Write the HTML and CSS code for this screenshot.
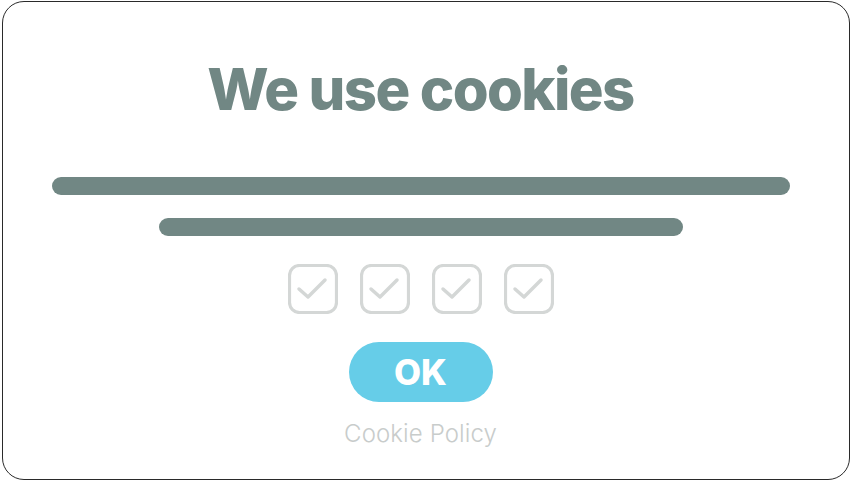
FILE: index.html
```html
<!DOCTYPE html>
<html>
<head>
<meta charset="utf-8">
<link rel="stylesheet" href="styles.css">
</head>
<body>
<div class="frame">
  <h1 class="title">We use cookies</h1>
  <div class="bar bar-long"></div>
  <div class="bar bar-short"></div>
  <div class="checks">
    <svg class="check" viewBox="0 0 50 50"><rect x="1.5" y="1.5" width="47" height="47" rx="10"/><path d="M11 25 L20 33 L37 16"/></svg>
    <svg class="check" viewBox="0 0 50 50"><rect x="1.5" y="1.5" width="47" height="47" rx="10"/><path d="M11 25 L20 33 L37 16"/></svg>
    <svg class="check" viewBox="0 0 50 50"><rect x="1.5" y="1.5" width="47" height="47" rx="10"/><path d="M11 25 L20 33 L37 16"/></svg>
    <svg class="check" viewBox="0 0 50 50"><rect x="1.5" y="1.5" width="47" height="47" rx="10"/><path d="M11 25 L20 33 L37 16"/></svg>
  </div>
  <button class="ok">OK</button>
  <a class="policy">Cookie Policy</a>
</div>
</body>
</html>
```

FILE: styles.css
```css
html, body {
  margin: 0;
  padding: 0;
  background: #ffffff;
}
.frame {
  box-sizing: border-box;
  margin: 1px 1px 0 2px;
  padding-right: 11px;
  height: 479px;
  border: 1.5px solid #2a2a2a;
  border-radius: 22px;
  display: flex;
  flex-direction: column;
  align-items: center;
  font-family: Inter, "Noto Sans", sans-serif;
}
.title {
  margin: 52px 0 0 0;
  font-size: 58px;
  line-height: 70px;
  font-weight: 800;
  color: #718784;
  letter-spacing: -1.6px;
}
.bar {
  height: 18px;
  border-radius: 9px;
  background: #718784;
}
.bar-long {
  width: 738px;
  margin-top: 53px;
}
.bar-short {
  width: 524px;
  margin-top: 23px;
}
.checks {
  display: flex;
  gap: 22px;
  margin-top: 28px;
}
.check {
  width: 50px;
  height: 50px;
}
.check rect {
  fill: none;
  stroke: #d4d7d6;
  stroke-width: 3.2;
}
.check path {
  fill: none;
  stroke: #d4d7d6;
  stroke-width: 3.5;
  stroke-linecap: round;
  stroke-linejoin: round;
}
.ok {
  margin-top: 28px;
  width: 144px;
  height: 60px;
  border: none;
  border-radius: 30px;
  background: #66cde8;
  color: #ffffff;
  font-family: Inter, sans-serif;
  font-weight: 800;
  font-size: 35px;
  line-height: 60px;
  padding: 0;
}
.policy {
  margin-top: 17px;
  font-size: 24px;
  line-height: 30px;
  color: #c8cccb;
  font-weight: 300;
  letter-spacing: 0.1px;
}
```
